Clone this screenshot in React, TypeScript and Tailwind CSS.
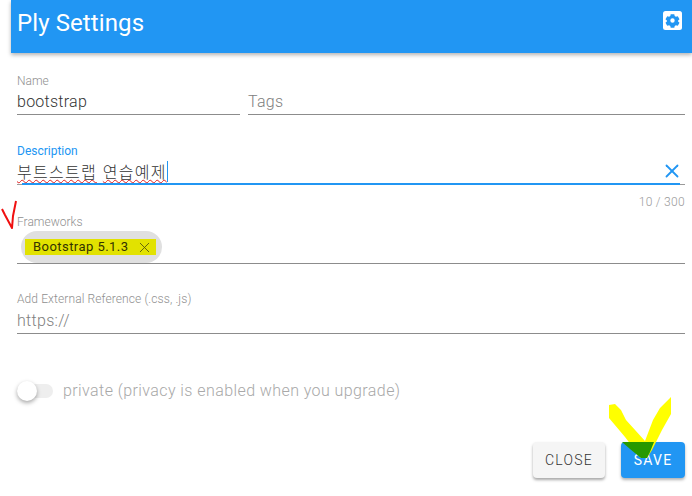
import { X } from "lucide-react";

const font = { fontFamily: "Roboto, 'Noto Sans CJK KR', sans-serif" };

function GearBox() {
  return (
    <svg width="19" height="19" viewBox="0 0 19 19">
      <rect x="0" y="0" width="19" height="19" rx="2.5" fill="#fff" />
      <path
        fill="#2196f3"
        fillRule="evenodd"
        d="M7.7 3.2h3.6l.4 1.9 1.2.7 1.9-.6 1.7 3-1.4 1.3v1l1.4 1.3-1.7 3-1.9-.6-1.2.7-.4 1.9H7.7l-.4-1.9-1.2-.7-1.9.6-1.7-3 1.4-1.3v-1L2.5 8.2l1.7-3 1.9.6 1.2-.7zM9.5 7.3a2.2 2.2 0 1 0 0 4.4 2.2 2.2 0 0 0 0-4.4z"
      />
    </svg>
  );
}

const wavy = "underline decoration-wavy decoration-[#e02020] decoration-1 underline-offset-1";

export default function App() {
  return (
    <div className="relative w-[692px] h-[496px] bg-white overflow-hidden" style={font}>
      <header className="ml-[11px] h-[53px] bg-[#2196f3] flex items-center justify-between pl-[6px] pr-[10px] shadow-[0_2px_4px_rgba(0,0,0,0.3)]">
        <h1 className="text-[24px] leading-[46px] -mt-[7px] text-white font-normal tracking-[0.1px]">Ply Settings</h1>
        <div className="-mt-[12px]">
          <GearBox />
        </div>
      </header>

      <main className="pl-[17px] pr-[7px]">
        <div className="flex gap-2 pt-[21px]">
          <div className="w-[223px]">
            <div className="text-[12px] leading-[14px] text-[#8f8f8f] font-light">Name</div>
            <div className="text-[16px] leading-[24px] mt-[2px] h-[25px] font-light text-[#333333] border-b border-[#8c8c8c] tracking-[0.25px]">bootstrap</div>
          </div>
          <div className="flex-1 pt-[16px]">
            <div className="text-[16px] leading-[24px] h-[25px] font-light text-[#808080] border-b border-[#8c8c8c] tracking-[0.3px]">Tags</div>
          </div>
        </div>

        <div className="mt-[29px]">
          <div className="text-[12px] leading-[14px] text-[#2196f3]">Description</div>
          <div className="relative flex items-center h-[27px] border-b border-[#9a9a9a]">
            <span className="flex text-[16px] leading-[24px] text-[#333333] tracking-[1.25px]" style={{ fontFamily: "'Noto Sans CJK KR', sans-serif", fontWeight: 300 }}>
              <span className={wavy}>부트스트랩</span>
              <span className="w-[6px]" />
              <span className={wavy}>연습예제</span>
            </span>
            <span className="w-px h-[21px] bg-[#2196f3]" />
            <X size={22} strokeWidth={2} className="absolute right-[2px] top-[2px] text-[#2196f3]" />
            <div className="absolute left-[5px] right-[5px] -bottom-px h-[2px] bg-[#2196f3]" />
          </div>
          <div className="text-right text-[12px] leading-[14px] mt-[10px] text-[#9a9a9a] font-light tracking-[0.3px]">10 / 300</div>
        </div>

        <div className="mt-[6px]">
          <div className="text-[12px] leading-[14px] text-[#8f8f8f] font-light">Frameworks</div>
          <div className="h-[35px] border-b border-[#8c8c8c] pl-[4px] pt-[2px]">
            <div className="inline-flex items-center h-[32px] w-[141px] rounded-full bg-[#e0e0e0] pl-[4px]">
              <div className="flex items-center h-[16px] w-[131px] bg-[#e2e200] pl-[8px] text-[13px] text-[#333300] tracking-[0.45px]">
                <span>Bootstrap 5.1.3</span>
                <X size={17} strokeWidth={1.25} className="ml-[8px] text-[#55550c]" />
              </div>
            </div>
          </div>
        </div>

        <div className="mt-[28px]">
          <div className="text-[12px] leading-[14px] text-[#8f8f8f] font-light tracking-[0.1px]">Add External Reference (.css, .js)</div>
          <div className="text-[16px] leading-[24px] mt-[3px] h-[25px] font-light text-[#808080] border-b border-[#8c8c8c] tracking-[0.3px]">https://</div>
        </div>

        <div className="flex items-center mt-[45px] h-[24px]">
          <div className="relative w-[36px] h-[14px] rounded-full bg-[#eeeeee]">
            <div className="absolute left-0 -top-[3px] w-[20px] h-[20px] rounded-full bg-white shadow-[0_2px_4px_rgba(0,0,0,0.35)]" />
          </div>
          <span className="ml-[10px] text-[16px] text-[#a8a8a8] font-light tracking-[0.42px]">private (privacy is enabled when you upgrade)</span>
        </div>

        <div className="flex justify-end gap-4 mt-[39px]">
          <button className="w-[72px] h-[36px] rounded bg-[#f5f5f5] text-[14px] font-light text-[#333333] tracking-[1.25px] shadow-[0_2px_3px_rgba(0,0,0,0.35)]">CLOSE</button>
          <button className="w-[64px] h-[36px] rounded bg-[#2196f3] text-[14px] text-white tracking-[1.25px] shadow-[0_2px_3px_rgba(0,0,0,0.3)]">SAVE</button>
        </div>
      </main>

      {/* hand-drawn annotation marks over the screenshot */}
      <svg className="absolute left-0 top-0 pointer-events-none" width="692" height="496" viewBox="0 0 692 496">
        <path d="M2 209 L5 215 L12 228 L13 216 L16 201" fill="none" stroke="#f01010" strokeWidth="2" strokeLinejoin="round" />
        <path d="M609 405 L615 404 L621 410 L626 420 L645 441 L653 420 L660 408 L671 397 L671 414 L662 430 L652 450 L647 458 L641 458 L625 437 L609 418 Z" fill="#ffff00" />
        <path d="M622 442 L654 442 L650 452 L647 458 L641 458 L630 449 Z" fill="#279900" />
      </svg>
    </div>
  );
}
